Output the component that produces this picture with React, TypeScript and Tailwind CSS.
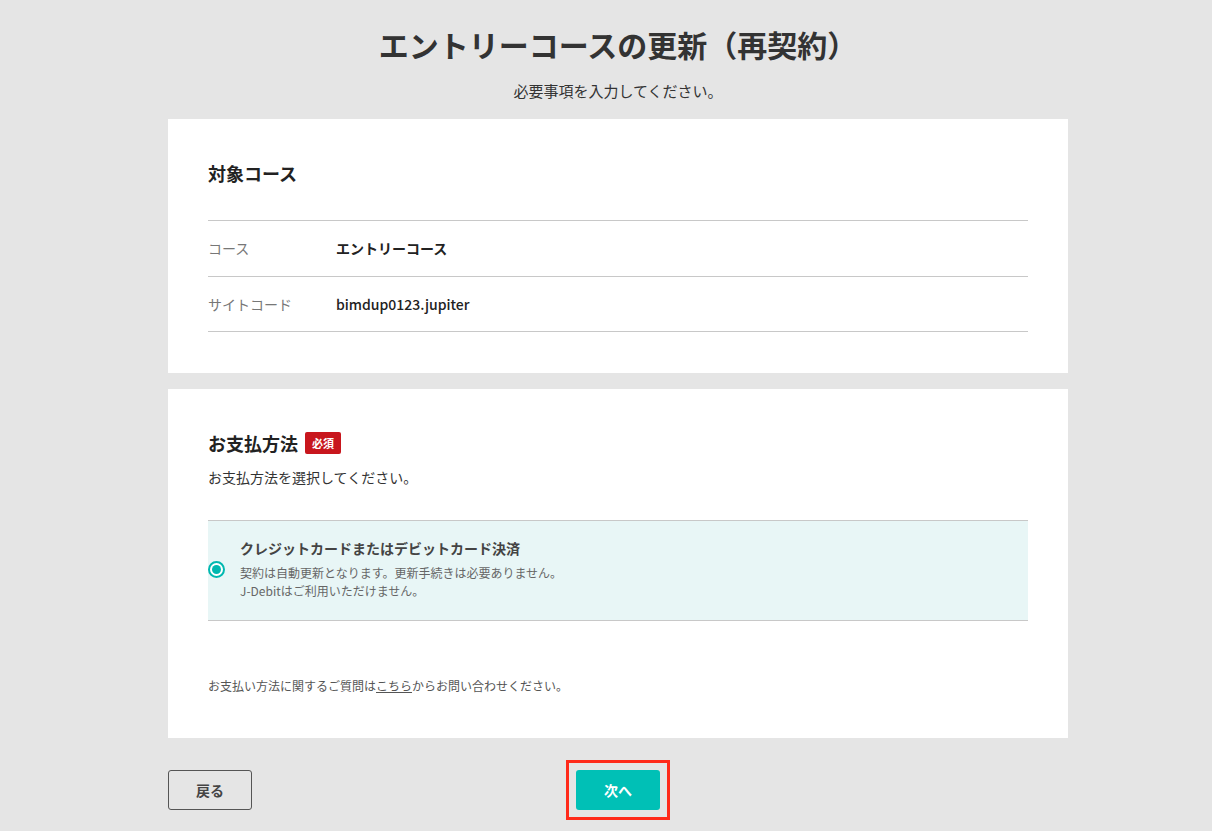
import React from 'react';

const font = { fontFamily: '"Noto Sans CJK JP", "Noto Sans", sans-serif' };

const App: React.FC = () => {
  return (
    <div className="min-h-[831px] bg-[#e5e5e5] pl-6 text-[#333]" style={font}>
      <div className="mx-auto w-[900px] pt-[22px] pb-10">
        <h1 className="text-center text-[30px] font-bold leading-[45px] text-[#333]">
          エントリーコースの更新（再契約）
        </h1>
        <p className="mt-[13px] text-center text-[15px] leading-[22px] text-[#333]">必要事項を入力してください。</p>

        <section className="mt-[17px] bg-white px-10 pt-10 pb-[41px]">
          <h2 className="text-[18px] font-bold leading-7 text-[#222]">対象コース</h2>
          <div className="mt-[33px] border-t border-[#c8c8c8]">
            <div className="flex h-[56px] items-center border-b border-[#c8c8c8] text-[14px]">
              <span className="w-32 text-[#777]">コース</span>
              <span className="font-bold text-[#222]">エントリーコース</span>
            </div>
            <div className="flex h-[55px] items-center border-b border-[#c8c8c8] text-[14px]">
              <span className="w-32 text-[#777]">サイトコード</span>
              <span className="font-medium text-[#222]">bimdup0123.jupiter</span>
            </div>
          </div>
        </section>

        <section className="mt-4 bg-white px-10 pt-10 pb-[43px]">
          <div className="flex items-center">
            <h2 className="text-[18px] font-bold leading-7 text-[#222]">お支払方法</h2>
            <span className="ml-[7px] flex h-[22px] w-9 items-center justify-center rounded-[2px] bg-[#c8161d] text-[11px] font-bold text-white">
              必須
            </span>
          </div>
          <p className="mt-[10px] text-[14px] leading-5 text-[#333]">お支払方法を選択してください。</p>

          <label className="mt-[33px] flex items-center border-y border-[#c8c8c8] bg-[#e8f6f6] pt-[17px] pb-5">
            <span className="flex h-[17px] w-[17px] shrink-0 items-center justify-center rounded-full border-2 border-[#00b8b0] bg-white">
              <span className="h-[9px] w-[9px] rounded-full bg-[#00b8b0]" />
            </span>
            <span className="ml-[15px] flex flex-col">
              <span className="text-[14px] font-bold leading-5 text-[#444]">クレジットカードまたはデビットカード決済</span>
              <span className="mt-[6px] text-[12px] leading-[18px] text-[#666]">契約は自動更新となります。更新手続きは必要ありません。</span>
              <span className="text-[12px] leading-[18px] text-[#666]">J-Debitはご利用いただけません。</span>
            </span>
          </label>

          <p className="mt-14 text-[12px] leading-[18px] text-[#555]">
            お支払い方法に関するご質問は<a href="#" className="underline">こちら</a>からお問い合わせください。
          </p>
        </section>

        <div className="relative mt-8 flex h-10 items-center justify-center">
          <button className="absolute left-0 top-0 h-10 w-[84px] rounded-[3px] border border-[#555] text-[14px] font-bold text-[#444]">
            戻る
          </button>
          <div className="border-[3px] border-[#ff2a1a] p-[7px]">
            <button className="block h-10 w-[84px] rounded-[3px] bg-[#00c0b6] text-[14px] font-bold text-white">次へ</button>
          </div>
        </div>
      </div>
    </div>
  );
};

export default App;
